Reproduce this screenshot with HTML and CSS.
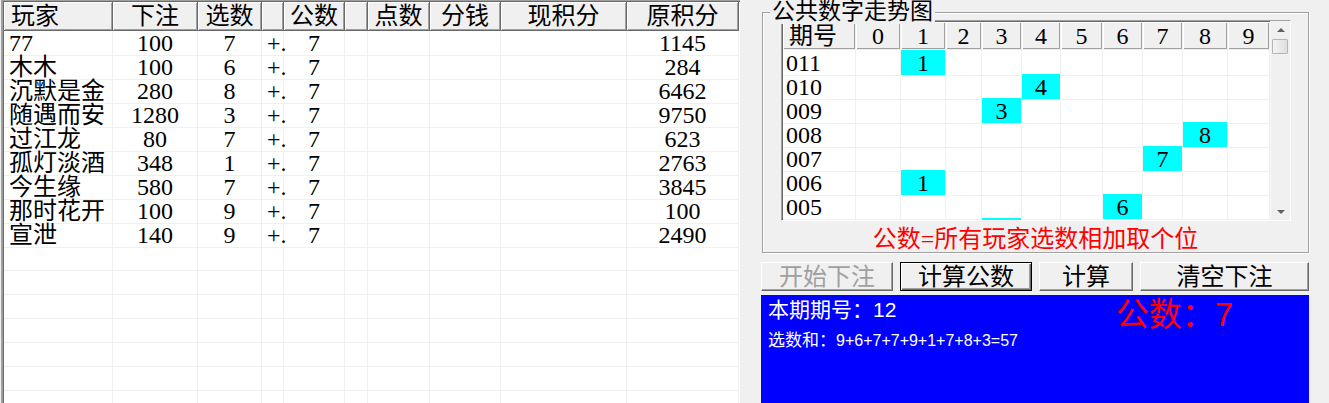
FILE: index.html
```html
<!DOCTYPE html>
<html lang="zh-CN">
<head>
<meta charset="utf-8">
<title>公共数字</title>
<link rel="stylesheet" href="styles.css">
</head>
<body>
<div class="app">
  <div class="players">
    <div class="players-inner">
      <div class="prow phead"><span class="name">玩家</span><span>下注</span><span>选数</span><span></span><span>公数</span><span></span><span>点数</span><span>分钱</span><span>现积分</span><span>原积分</span></div>
      <div class="prow"><span class="name">77</span><span>100</span><span>7</span><span class="op">+.</span><span>7</span><span></span><span></span><span></span><span></span><span>1145</span></div>
      <div class="prow"><span class="name">木木</span><span>100</span><span>6</span><span class="op">+.</span><span>7</span><span></span><span></span><span></span><span></span><span>284</span></div>
      <div class="prow"><span class="name">沉默是金</span><span>280</span><span>8</span><span class="op">+.</span><span>7</span><span></span><span></span><span></span><span></span><span>6462</span></div>
      <div class="prow"><span class="name">随遇而安</span><span>1280</span><span>3</span><span class="op">+.</span><span>7</span><span></span><span></span><span></span><span></span><span>9750</span></div>
      <div class="prow"><span class="name">过江龙</span><span>80</span><span>7</span><span class="op">+.</span><span>7</span><span></span><span></span><span></span><span></span><span>623</span></div>
      <div class="prow"><span class="name">孤灯淡酒</span><span>348</span><span>1</span><span class="op">+.</span><span>7</span><span></span><span></span><span></span><span></span><span>2763</span></div>
      <div class="prow"><span class="name">今生缘</span><span>580</span><span>7</span><span class="op">+.</span><span>7</span><span></span><span></span><span></span><span></span><span>3845</span></div>
      <div class="prow"><span class="name">那时花开</span><span>100</span><span>9</span><span class="op">+.</span><span>7</span><span></span><span></span><span></span><span></span><span>100</span></div>
      <div class="prow"><span class="name">宣泄</span><span>140</span><span>9</span><span class="op">+.</span><span>7</span><span></span><span></span><span></span><span></span><span>2490</span></div>
      <div class="prow"><span></span><span></span><span></span><span></span><span></span><span></span><span></span><span></span><span></span><span></span></div>
      <div class="prow"><span></span><span></span><span></span><span></span><span></span><span></span><span></span><span></span><span></span><span></span></div>
      <div class="prow"><span></span><span></span><span></span><span></span><span></span><span></span><span></span><span></span><span></span><span></span></div>
      <div class="prow"><span></span><span></span><span></span><span></span><span></span><span></span><span></span><span></span><span></span><span></span></div>
      <div class="prow"><span></span><span></span><span></span><span></span><span></span><span></span><span></span><span></span><span></span><span></span></div>
      <div class="prow"><span></span><span></span><span></span><span></span><span></span><span></span><span></span><span></span><span></span><span></span></div>
      <div class="prow"><span></span><span></span><span></span><span></span><span></span><span></span><span></span><span></span><span></span><span></span></div>
    </div>
  </div>

  <div class="side">
    <div class="group">
      <div class="group-title">公共数字走势图</div>
      <div class="trend">
        <div class="trend-table">
          <div class="trow thead"><span class="period">期号</span><span>0</span><span>1</span><span>2</span><span>3</span><span>4</span><span>5</span><span>6</span><span>7</span><span>8</span><span>9</span></div>
          <div class="trow"><span class="period">011</span><span></span><span class="hit">1</span><span></span><span></span><span></span><span></span><span></span><span></span><span></span><span></span></div>
          <div class="trow"><span class="period">010</span><span></span><span></span><span></span><span></span><span class="hit">4</span><span></span><span></span><span></span><span></span><span></span></div>
          <div class="trow"><span class="period">009</span><span></span><span></span><span></span><span class="hit">3</span><span></span><span></span><span></span><span></span><span></span><span></span></div>
          <div class="trow"><span class="period">008</span><span></span><span></span><span></span><span></span><span></span><span></span><span></span><span></span><span class="hit">8</span><span></span></div>
          <div class="trow"><span class="period">007</span><span></span><span></span><span></span><span></span><span></span><span></span><span></span><span class="hit">7</span><span></span><span></span></div>
          <div class="trow"><span class="period">006</span><span></span><span class="hit">1</span><span></span><span></span><span></span><span></span><span></span><span></span><span></span><span></span></div>
          <div class="trow"><span class="period">005</span><span></span><span></span><span></span><span></span><span></span><span></span><span class="hit">6</span><span></span><span></span><span></span></div>
          <div class="trow"><span class="period"></span><span></span><span></span><span></span><span class="hit"></span><span></span><span></span><span></span><span></span><span></span><span></span></div>
        </div>
        <div class="scrollbar">
          <span class="sb-btn"><span class="arrow-up"></span></span>
          <span class="thumb"></span>
          <span class="sb-track"></span>
          <span class="sb-btn"><span class="arrow-down"></span></span>
        </div>
      </div>
      <div class="caption">公数=所有玩家选数相加取个位</div>
    </div>

    <div class="buttons">
      <button class="btn btn-start" disabled>开始下注</button>
      <button class="btn btn-calc-public">计算公数</button>
      <button class="btn btn-calc">计算</button>
      <button class="btn btn-clear">清空下注</button>
    </div>

    <div class="result">
      <div class="result-top">
        <span class="period-no">本期期号：12</span>
        <span class="public">公数：7</span>
      </div>
      <div class="sum"><span class="sum-label">选数和：</span>9+6+7+7+9+1+7+8+3=57</div>
    </div>
  </div>
</div>
</body>
</html>
```

FILE: styles.css
```css
* {
  box-sizing: border-box;
}

html, body {
  margin: 0;
  padding: 0;
}

body {
  background: #f0f0f0;
  font-family: "Liberation Serif", "Noto Sans CJK SC", serif;
  color: #000;
}

.app {
  display: flex;
  width: 1329px;
  height: 403px;
  overflow: hidden;
}

/* ---------- player grid ---------- */
.players {
  flex: none;
  width: 739px;
  margin-left: 1px;
  border-left: 2px solid #a0a0a0;
  border-top: 1px solid #a0a0a0;
  background: #fff;
}

.players-inner {
  height: 100%;
  border-left: 1px solid #696969;
  border-top: 1px solid #696969;
  overflow: hidden;
}

.prow {
  display: grid;
  grid-template-columns: 109px 85px 64px 22px 61px 23px 62px 71px 126px 112px;
  height: 24px;
  font-size: 24px;
}

.prow > span {
  border-right: 1px solid #f0f0f0;
  border-bottom: 1px solid #f0f0f0;
  text-align: center;
  line-height: 24px;
  white-space: nowrap;
}

.prow > .name {
  text-align: left;
  padding-left: 5px;
}

.prow > .op {
  text-align: left;
  padding-left: 5px;
}

.phead {
  height: 29px;
}

.phead > span,
.thead > span {
  background: #f0f0f0;
  border-right: 1px solid #696969;
  border-bottom: 1px solid #696969;
  box-shadow: inset 1px 1px 0 #fff, inset -1px -1px 0 #a0a0a0;
  line-height: 28px;
}

.phead > .name {
  padding-left: 7px;
}

/* ---------- right side ---------- */
.side {
  flex: 1;
  display: flex;
  flex-direction: column;
  padding: 12px 20px 0 21px;
}

.group {
  position: relative;
  width: 547px;
  height: 241px;
  margin-left: 1px;
  padding-top: 7px;
  border: 1px solid #a0a0a0;
  box-shadow: inset 1px 1px 0 #fff, 1px 1px 0 #fff;
}

.group-title {
  position: absolute;
  top: -13px;
  left: 7px;
  padding: 0 2px;
  background: #f0f0f0;
  font-size: 23px;
  line-height: 24px;
  white-space: nowrap;
}

.trend {
  display: flex;
  width: 510px;
  height: 201px;
  margin-left: 18px;
  border: 1px solid;
  border-color: #a0a0a0 #fff #fff #a0a0a0;
  background: #fff;
}

.trend-table {
  width: 488px;
  border-left: 1px solid #696969;
  border-top: 1px solid #696969;
  overflow: hidden;
}

.trow {
  display: grid;
  grid-template-columns: 73px 45px 45px 36px 40px 39px 42px 40px 40px 45px 42px;
  height: 24px;
  font-size: 24px;
}

.trow > span {
  border-right: 1px solid #f0f0f0;
  border-bottom: 1px solid #f0f0f0;
  text-align: center;
  line-height: 24px;
  padding-top: 1px;
  white-space: nowrap;
}

.trow > .period {
  text-align: left;
  padding-left: 3px;
}

.trow > .hit {
  background: #00ffff;
}

.thead {
  height: 28px;
}

.thead > span {
  padding-top: 2px;
  line-height: 25px;
}

.thead > .period {
  padding-left: 6px;
}

.scrollbar {
  flex: 1;
  display: flex;
  flex-direction: column;
  background: #f0f0f0;
  border-left: 1px solid #f7f7f7;
}

.sb-btn {
  flex: none;
  height: 17px;
  display: flex;
  align-items: center;
  justify-content: center;
}

.arrow-up {
  width: 0;
  height: 0;
  border-left: 4px solid transparent;
  border-right: 4px solid transparent;
  border-bottom: 4px solid #606060;
}

.arrow-down {
  width: 0;
  height: 0;
  border-left: 4px solid transparent;
  border-right: 4px solid transparent;
  border-top: 4px solid #606060;
}

.thumb {
  flex: none;
  height: 15px;
  margin: 1px 2px 0 1px;
  border: 1px solid #b4b4b4;
  border-radius: 1px;
  background: linear-gradient(to right, #f4f4f4, #dedede);
}

.sb-track {
  flex: 1;
}

.caption {
  margin-top: 6px;
  text-align: center;
  color: #ff0000;
  font-size: 24px;
  line-height: 24px;
  white-space: nowrap;
}

/* ---------- buttons ---------- */
.buttons {
  display: flex;
  gap: 7px;
  margin-top: 9px;
}

.btn {
  flex: none;
  height: 29px;
  padding: 0;
  margin: 0;
  font-family: "Liberation Serif", "Noto Sans CJK SC", serif;
  font-size: 24px;
  line-height: 26px;
  color: #000;
  background: #f0f0f0;
  border: 1px solid;
  border-color: #fff #696969 #696969 #fff;
  box-shadow: inset -1px -1px 0 #a0a0a0;
  border-radius: 0;
}

.btn-start {
  width: 132px;
  color: #a0a0a0;
}

.btn-calc-public {
  width: 132px;
  border-color: #000;
  box-shadow: inset 1px 1px 0 #fff, inset -1px -1px 0 #696969, inset -2px -2px 0 #a0a0a0;
}

.btn-calc {
  width: 94px;
}

.btn-clear {
  width: 169px;
}

/* ---------- result panel ---------- */
.result {
  flex: 1;
  width: 548px;
  margin-top: 4px;
  padding: 3px 7px 0 7px;
  background: #0000ff;
  color: #fff;
  font-family: "Liberation Sans", "Noto Sans CJK SC", sans-serif;
}

.result-top {
  display: flex;
  align-items: flex-start;
  height: 33px;
}

.period-no {
  font-size: 21px;
  line-height: 24px;
  white-space: nowrap;
}

.public {
  margin-left: auto;
  margin-right: 69px;
  margin-top: 0;
  color: #ff0000;
  font-size: 33px;
  line-height: 34px;
  white-space: nowrap;
}

.sum {
  font-size: 16px;
  line-height: 20px;
  white-space: nowrap;
}

.sum-label {
  font-size: 17px;
}
```
